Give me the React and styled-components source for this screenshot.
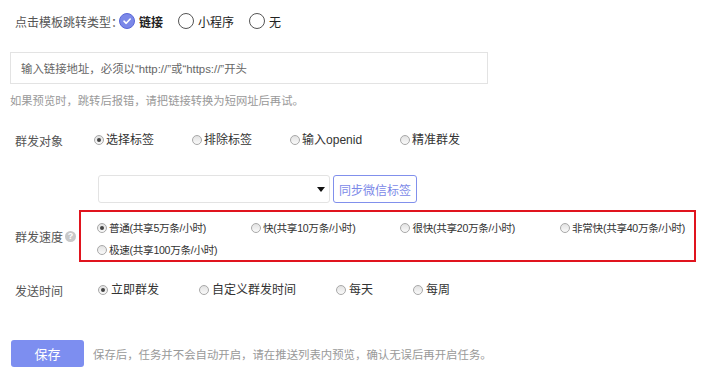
import React from "react";
import styled, { createGlobalStyle } from "styled-components";

const GlobalStyle = createGlobalStyle`
  html, body {
    margin: 0;
    padding: 0;
    background: #fff;
  }
  body {
    font-family: "Liberation Sans", "Noto Sans CJK SC", sans-serif;
    font-size: 12px;
    color: #333;
  }
`;

const Page = styled.div`
  width: 720px;
  height: 378px;
  padding: 10px 0 0 10px;
  box-sizing: border-box;
  overflow: hidden;
`;

const TypeRow = styled.div`
  display: flex;
  align-items: center;
  height: 22px;
  padding-left: 5px;
  gap: 15px;
`;

const TypeLabel = styled.span`
  color: #555;
  margin-right: -19px;
`;

const BigOption = styled.label`
  display: flex;
  align-items: center;
  gap: 4px;
  font-weight: ${(p) => (p.$checked ? 700 : 400)};
  color: #222;
`;

const BigRadio = styled.span`
  width: 16px;
  height: 16px;
  box-sizing: border-box;
  border-radius: 50%;
  border: 1px solid ${(p) => (p.$checked ? "#5a67d8" : "#555")};
  background: ${(p) => (p.$checked ? "#7b88e8" : "#fff")};
  display: flex;
  align-items: center;
  justify-content: center;
`;

const LinkInput = styled.div`
  margin-top: 20px;
  width: 478px;
  height: 32px;
  box-sizing: border-box;
  border: 1px solid #e3e3e3;
  padding-left: 10px;
  display: flex;
  align-items: center;
  color: #666;
  font-size: 11.4px;
`;

const Hint = styled.div`
  margin-top: 9px;
  line-height: 16px;
  color: #999;
  font-size: 11.3px;
`;

const FormRow = styled.div`
  display: flex;
  align-items: center;
  margin-top: ${(p) => p.$top}px;
  padding-left: 5px;
  min-height: 20px;
`;

const RowLabel = styled.span`
  width: ${(p) => p.$width}px;
  flex-shrink: 0;
  color: #555;
  display: flex;
  align-items: center;
  gap: 2px;
`;

const Options = styled.div`
  display: flex;
  flex-wrap: wrap;
  column-gap: ${(p) => p.$gap}px;
  row-gap: 4px;
  font-size: ${(p) => p.$size || 12}px;
  letter-spacing: ${(p) => p.$tracking || 0}px;
`;

const Option = styled.label`
  display: flex;
  align-items: center;
  gap: ${(p) => p.$gap}px;
  line-height: 18px;
  color: #333;
`;

const SmallRadio = styled.span`
  width: 10px;
  height: 10px;
  box-sizing: border-box;
  border-radius: 50%;
  border: 1px solid #a8a8a8;
  background: linear-gradient(#e2e2e2, #fafafa);
  display: flex;
  align-items: center;
  justify-content: center;

  &::after {
    content: "";
    display: ${(p) => (p.$checked ? "block" : "none")};
    width: 4px;
    height: 4px;
    border-radius: 50%;
    background: #444;
  }
`;

const SelectRow = styled.div`
  display: flex;
  margin-top: 25px;
  margin-left: 88px;
  gap: 3px;
`;

const Select = styled.div`
  width: 232px;
  height: 28px;
  box-sizing: border-box;
  border: 1px solid #e3e3e3;
  border-radius: 3px;
  display: flex;
  align-items: center;
  justify-content: flex-end;
  padding-right: 4px;
`;

const Caret = styled.span`
  width: 0;
  height: 0;
  border-left: 4.5px solid transparent;
  border-right: 4.5px solid transparent;
  border-top: 5px solid #111;
`;

const SyncButton = styled.button`
  height: 28px;
  padding: 0 5px;
  border: 1px solid #8190ec;
  border-radius: 3px;
  background: #fff;
  color: #7b88e8;
  font-family: inherit;
  font-size: 12px;
`;

const SpeedBox = styled.div`
  width: 617px;
  box-sizing: border-box;
  border: 2px solid #e0141e;
  padding: 7px 0 1px 16px;
`;

const Help = styled.span`
  width: 11px;
  height: 11px;
  border-radius: 50%;
  background: #c8c8c8;
  color: #fff;
  font-size: 9px;
  font-weight: 700;
  line-height: 11px;
  text-align: center;
`;

const Footer = styled.div`
  display: flex;
  align-items: center;
  gap: 9px;
  margin-top: 40px;
  padding-left: 1px;
`;

const SaveButton = styled.button`
  width: 73px;
  height: 27px;
  border: none;
  border-radius: 3px;
  background: #7d8ef0;
  color: #fff;
  font-family: inherit;
  font-size: 13px;
`;

const FooterHint = styled.span`
  color: #999;
  font-size: 11.4px;
`;

const Check = () => (
  <svg width="10" height="10" viewBox="0 0 10 10">
    <path d="M2 5.2 L4.2 7.3 L8.2 3" fill="none" stroke="#fff" strokeWidth="1.6" strokeLinecap="round" strokeLinejoin="round" />
  </svg>
);

const targets = ["选择标签", "排除标签", "输入openid", "精准群发"];
const speeds = [
  "普通(共享5万条/小时)",
  "快(共享10万条/小时)",
  "很快(共享20万条/小时)",
  "非常快(共享40万条/小时)",
  "极速(共享100万条/小时)",
];
const times = ["立即群发", "自定义群发时间", "每天", "每周"];

const App = () => (
  <>
    <GlobalStyle />
    <Page>
      <TypeRow>
        <TypeLabel>点击模板跳转类型：</TypeLabel>
        {["链接", "小程序", "无"].map((t, i) => (
          <BigOption key={t} $checked={i === 0}>
            <BigRadio $checked={i === 0}>{i === 0 && <Check />}</BigRadio>
            {t}
          </BigOption>
        ))}
      </TypeRow>

      <LinkInput>输入链接地址，必须以“http://”或“https://”开头</LinkInput>
      <Hint>如果预览时，跳转后报错，请把链接转换为短网址后再试。</Hint>

      <FormRow $top={21}>
        <RowLabel $width={79}>群发对象</RowLabel>
        <Options $gap={38}>
          {targets.map((t, i) => (
            <Option key={t} $gap={2}>
              <SmallRadio $checked={i === 0} />
              {t}
            </Option>
          ))}
        </Options>
      </FormRow>

      <SelectRow>
        <Select>
          <Caret />
        </Select>
        <SyncButton>同步微信标签</SyncButton>
      </SelectRow>

      <FormRow $top={7}>
        <RowLabel $width={64}>
          群发速度 <Help>?</Help>
        </RowLabel>
        <SpeedBox>
          <Options $gap={45} $size={10.6} $tracking={-0.3}>
            {speeds.map((t, i) => (
              <Option key={t} $gap={2}>
                <SmallRadio $checked={i === 0} />
                {t}
              </Option>
            ))}
          </Options>
        </SpeedBox>
      </FormRow>

      <FormRow $top={18}>
        <RowLabel $width={83}>发送时间</RowLabel>
        <Options $gap={40}>
          {times.map((t, i) => (
            <Option key={t} $gap={3}>
              <SmallRadio $checked={i === 0} />
              {t}
            </Option>
          ))}
        </Options>
      </FormRow>

      <Footer>
        <SaveButton>保存</SaveButton>
        <FooterHint>保存后，任务并不会自动开启，请在推送列表内预览，确认无误后再开启任务。</FooterHint>
      </Footer>
    </Page>
  </>
);

export default App;
